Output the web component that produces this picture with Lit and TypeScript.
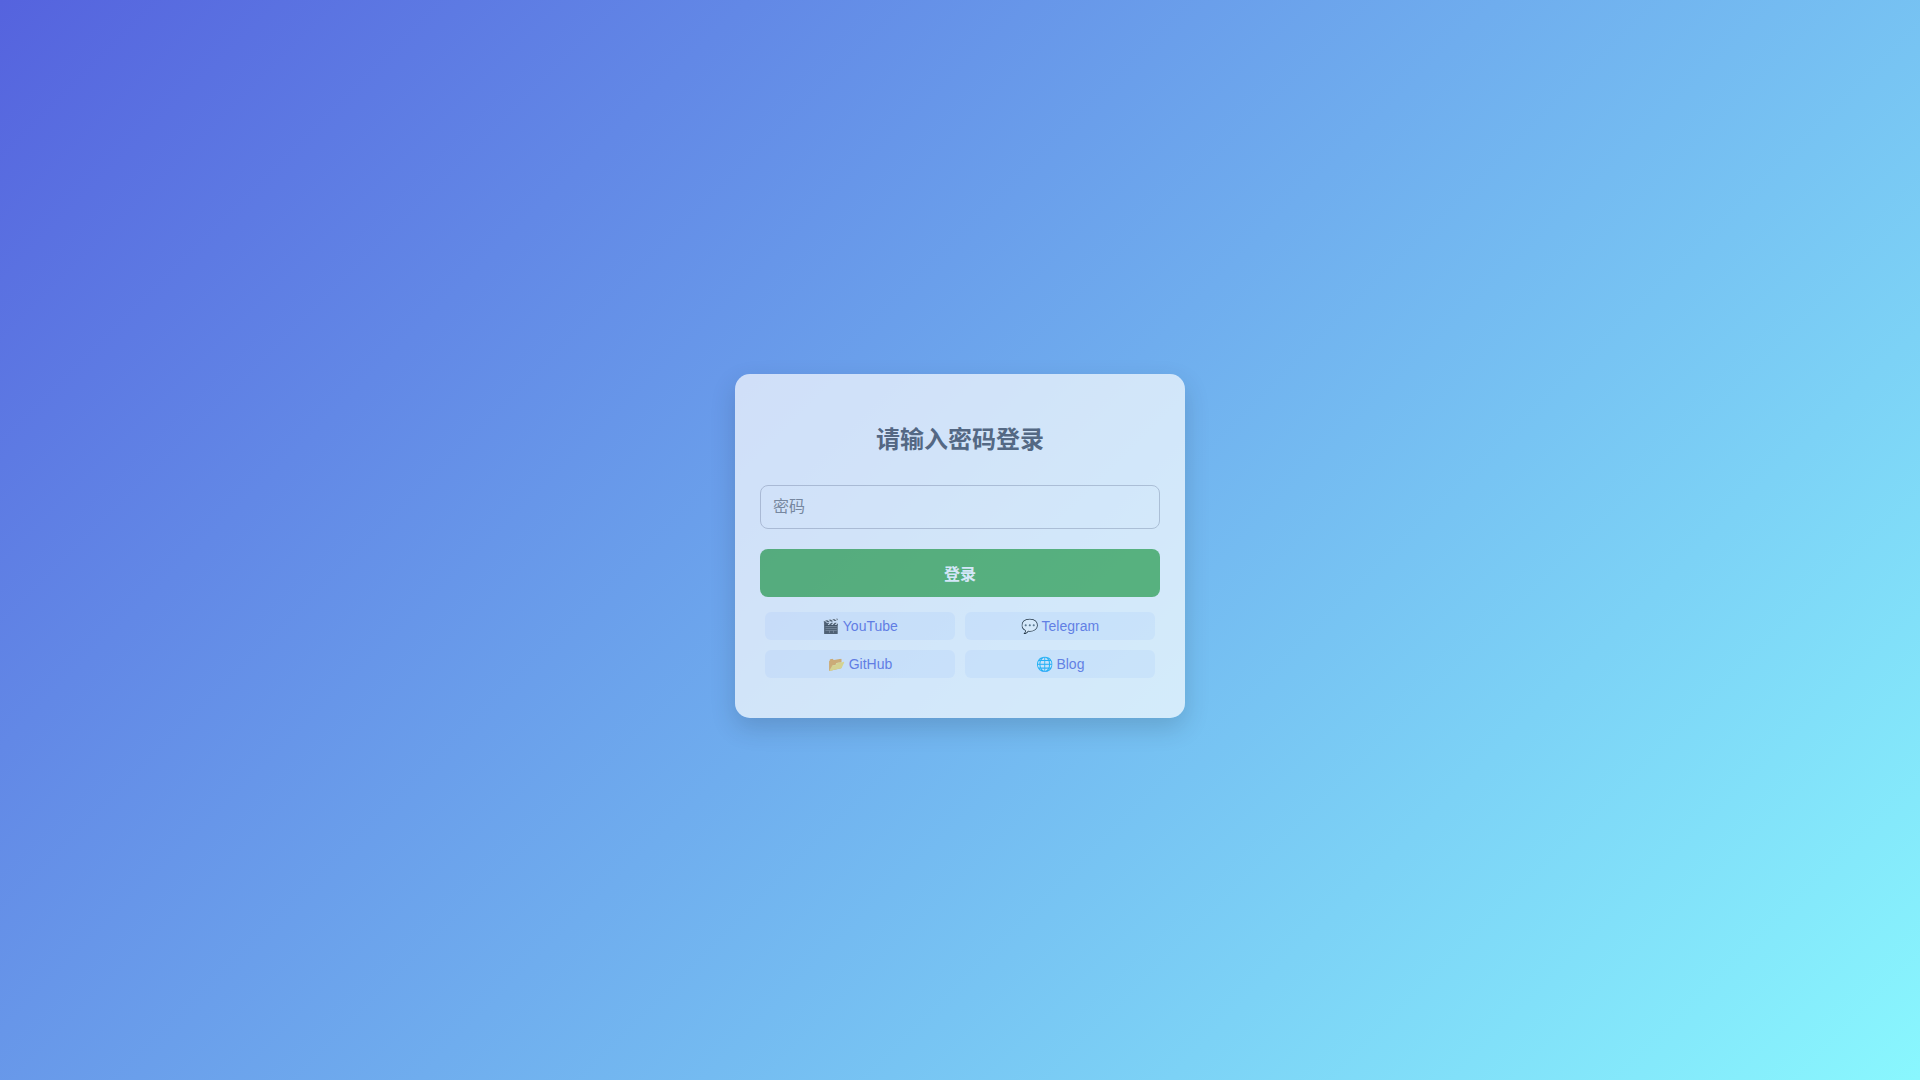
import { LitElement, html, css } from "lit";
import { customElement } from "lit/decorators.js";

const LINKS = [
  { icon: "🎬", label: "YouTube", href: "#youtube" },
  { icon: "💬", label: "Telegram", href: "#telegram" },
  { icon: "📂", label: "GitHub", href: "#github" },
  { icon: "🌐", label: "Blog", href: "#blog" },
];

@customElement("app-root")
export class AppRoot extends LitElement {
  static styles = css`
    :host {
      display: flex;
      align-items: center;
      justify-content: center;
      min-height: 100vh;
      font-family: "Liberation Sans", "Noto Sans CJK SC", sans-serif;
      background: linear-gradient(135deg, #5563de, #89f7fe);
    }
    .card {
      box-sizing: border-box;
      width: 100%;
      max-width: 450px;
      margin-top: 12px;
      padding: 46px 25px 40px;
      border-radius: 15px;
      background: rgba(255, 255, 255, 0.98);
      box-shadow: 0 10px 25px rgba(0, 0, 0, 0.2);
      text-align: center;
      opacity: 0.7;
    }
    .title {
      margin: 0 0 26px;
      font-size: 24px;
      line-height: 39px;
      font-weight: 700;
      color: #4a4e58;
    }
    .form {
      display: flex;
      flex-direction: column;
      gap: 20px;
    }
    .field,
    .submit {
      box-sizing: border-box;
      width: 100%;
      border-radius: 8px;
      font-family: inherit;
      font-size: 16px;
    }
    .field {
      height: 44px;
      padding: 0 12px;
      border: 1px solid #c4c4cc;
      background: transparent;
      color: #4a4e58;
    }
    .field::placeholder {
      color: #7c7c80;
    }
    .submit {
      height: 48px;
      padding: 0;
      border: none;
      background: #4caf50;
      color: #fff;
      font-weight: 700;
      cursor: pointer;
    }
    .links {
      display: grid;
      grid-template-columns: 1fr 1fr;
      gap: 10px;
      margin-top: 15px;
      padding: 0 5px;
    }
    .link {
      padding: 6px 0;
      border-radius: 6px;
      background: rgba(85, 140, 255, 0.09);
      color: #5b69e0;
      font-size: 14px;
      line-height: 16px;
      text-decoration: none;
    }
  `;

  render() {
    return html`
      <main class="card">
        <h1 class="title">请输入密码登录</h1>
        <form class="form" @submit=${(e: Event) => e.preventDefault()}>
          <input class="field" type="password" placeholder="密码" aria-label="密码" />
          <button class="submit" type="submit">登录</button>
        </form>
        <nav class="links">
          ${LINKS.map((l) => html`<a class="link" href=${l.href}>${l.icon} ${l.label}</a>`)}
        </nav>
      </main>
    `;
  }
}
